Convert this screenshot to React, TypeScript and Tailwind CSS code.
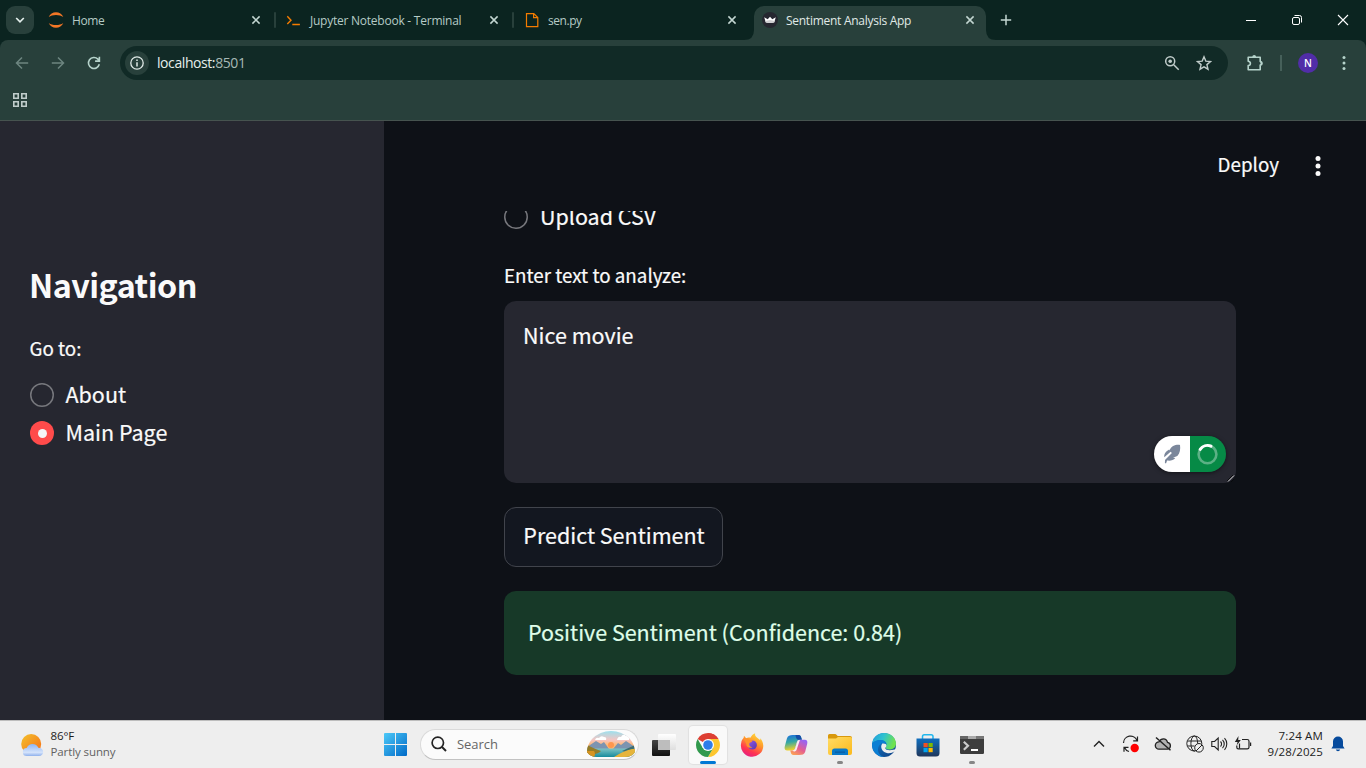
import React from "react";

const ui = "font-['Open_Sans','Noto_Sans',sans-serif]";
const src = "font-['Noto_Sans_CJK_SC','Noto_Sans',sans-serif] [-webkit-text-stroke:0.2px]";

function CloseX() {
  return (
    <svg className="block h-2.5 w-2.5 shrink-0" viewBox="0 0 10 10" stroke="#c3d6d1" strokeWidth="1.5">
      <path d="M1.4 1.4 8.6 8.6M8.6 1.4 1.4 8.6" />
    </svg>
  );
}

function JupyterIcon() {
  return (
    <svg className="block h-4 w-4" viewBox="0 0 16 16" fill="#f37726">
      <path d="M.7 5.1C2 2.1 4.8.3 8 .3s6 1.800 7.300 4.800C13.500 3.700 10.900 2.900 8 2.900S2.500 3.700.7 5.100Z" />
      <path d="M.7 10.900C2 13.900 4.800 15.700 8 15.700s6-1.800 7.300-4.800C13.500 12.300 10.900 13.100 8 13.100s-5.500-.8-7.300-2.200Z" />
    </svg>
  );
}

function PromptIcon() {
  return (
    <svg className="block h-4 w-4" viewBox="0 0 16 16" fill="none" stroke="#f57c00" strokeWidth="1.400">
      <path d="M1.300 4.300 5 8.200 1.300 12.100M6.300 12.500h7.600" />
    </svg>
  );
}

function PageIcon() {
  return (
    <svg className="block h-4 w-4" viewBox="0 0 16 16" fill="none" stroke="#f57c00" strokeWidth="1.200">
      <path d="M2.500 1.600h7.300l4 4v9H2.500ZM9.600 1.600v4h4.200" />
    </svg>
  );
}

function CrownIcon() {
  return (
    <svg className="block h-4 w-4" viewBox="0 0 16 16">
      <circle cx="8" cy="8" r="8" fill="#262730" />
      <path d="M2.200 5.300 5.700 7.200 8 4.700l2.300 2.500 3.500-1.900-1.500 5q-4.300 1-8.600 0Z" fill="#fff" />
      <path d="M3.400 9 8 8l4.600 1-.4 1.500q-4.200 1-8.400 0Z" fill="#cfcfd2" />
    </svg>
  );
}

function Tab({ icon, title, track }: { icon: React.ReactNode; title: string; track: string }) {
  return (
    <div className="flex h-7 w-[232px] items-center pl-2 pr-[11px]">
      {icon}
      <span className={`ml-2 flex-1 whitespace-nowrap pt-0.5 text-[12px] leading-4 ${track}`}>{title}</span>
      <CloseX />
    </div>
  );
}

function TabSep() {
  return <div className="ml-0.5 mr-0.5 h-4 w-0.5 rounded bg-[#28403b]" />;
}

function TabStrip() {
  return (
    <div className="flex h-10 items-start bg-[#0b2420] text-[#b6cbc6]">
      <div className="ml-1.5 mt-1.5 flex h-7 w-7 items-center justify-center rounded-[9px] bg-[#28403b]">
        <svg className="h-2.5 w-2.5" viewBox="0 0 10 10" fill="none" stroke="#e3efec" strokeWidth="1.700">
          <path d="M1.200 3 5 6.800 8.800 3" />
        </svg>
      </div>
      <div className="ml-1.5 mt-1.5 flex items-center">
        <Tab icon={<JupyterIcon />} title="Home" track="tracking-[-0.400px]" />
        <TabSep />
        <Tab icon={<PromptIcon />} title="Jupyter Notebook - Terminal" track="tracking-[-0.240px]" />
        <TabSep />
        <Tab icon={<PageIcon />} title="sen.py" track="tracking-[-0.450px]" />
      </div>
      <div className="flex h-10 items-end">
        <svg className="-ml-1 h-2.5 w-2.5" viewBox="0 0 10 10" fill="#28403b"><path d="M10 0v10H0Q10 10 10 0Z" /></svg>
        <div className="h-[34px] rounded-t-[10px] bg-[#28403b] text-[#e0eae7]">
          <Tab icon={<CrownIcon />} title="Sentiment Analysis App" track="tracking-[-0.270px]" />
        </div>
        <svg className="h-2.5 w-2.5" viewBox="0 0 10 10" fill="#28403b"><path d="M0 0v10h10Q0 10 0 0Z" /></svg>
      </div>
      <svg className="ml-1 mt-[14px] h-3 w-3" viewBox="0 0 12 12" stroke="#c3d6d1" strokeWidth="1.500">
        <path d="M6 .8v10.400M.8 6h10.400" />
      </svg>
      <div className="ml-auto mr-[17px] mt-[14px] flex items-center gap-[34px]">
        <svg className="h-3 w-3" viewBox="0 0 12 12" stroke="#fff"><path d="M1 6.500h10" /></svg>
        <svg className="h-3 w-3" viewBox="0 0 12 12" fill="none" stroke="#fff" strokeWidth="1">
          <rect x="1.500" y="3.500" width="7" height="7" rx="1.500" />
          <path d="M3.500 1.500h5a2 2 0 0 1 2 2v5" />
        </svg>
        <svg className="h-3 w-3" viewBox="0 0 12 12" stroke="#fff" strokeWidth="1.100"><path d="m1 1 10 10M11 1 1 11" /></svg>
      </div>
    </div>
  );
}

function Toolbar() {
  return (
    <div className="bg-[#0b2420]">
      <div className="flex h-[81px] flex-col rounded-t-lg border-b border-[#46534f] bg-[#28403b]">
        <div className="mt-[5px] flex h-9 items-center">
          <svg className="ml-[15px] h-3.5 w-3.5" viewBox="0 0 14 14" fill="none" stroke="#6d8580" strokeWidth="1.500"><path d="M13.200 7H1.500M7 1.500 1.500 7 7 12.500" /></svg>
          <svg className="ml-[22px] h-3.5 w-3.5" viewBox="0 0 14 14" fill="none" stroke="#6d8580" strokeWidth="1.500"><path d="M.8 7h11.700M7 1.500 12.500 7 7 12.500" /></svg>
          <svg className="ml-[22px] h-3.5 w-3.5" viewBox="0 0 14 14" fill="none" stroke="#b6d3cb" strokeWidth="1.600"><path d="M12.300 8.300A5.500 5.500 0 1 1 10.900 3.100L12.300 4.500M12.400.8v4.300H8.100" /></svg>
          <div className="ml-[19px] flex h-[34px] w-[1108px] items-center rounded-full bg-[#112a26]">
            <div className="ml-[5px] flex h-6 w-6 items-center justify-center rounded-full bg-[#28403b]">
              <svg className="h-3.5 w-3.5" viewBox="0 0 14 14" fill="none" stroke="#e0eae7" strokeWidth="1.300">
                <circle cx="7" cy="7" r="6.200" /><path d="M7 6.200v4.200M7 3.500v1.500" strokeWidth="1.500" />
              </svg>
            </div>
            <div className="ml-2 flex-1 text-[14px] leading-5 tracking-[-0.420px] text-[#e5efec]">
              localhost:<span className="text-[#a7b9b5]">8501</span>
            </div>
            <svg className="h-4 w-4" viewBox="0 0 16 16" fill="none" stroke="#c0ccca" strokeWidth="1.500">
              <circle cx="6.200" cy="6.200" r="4.500" /><path d="m9.700 9.700 5 5" /><circle cx="6.200" cy="6.200" r="1.800" fill="#c0ccca" stroke="none" />
            </svg>
            <svg className="ml-4 mr-4 h-4 w-4" viewBox="0 0 16 16" fill="none" stroke="#c0ccca" strokeWidth="1.400">
              <path d="m8 1.800 1.800 4.300 4.700.4-3.600 3.100 1.100 4.600L8 11.800l-4 2.400 1.100-4.600L1.500 6.500l4.700-.4Z" />
            </svg>
          </div>
          <svg className="ml-[18px] h-[18px] w-[18px]" viewBox="0 0 18 18" fill="none" stroke="#b6d3cb" strokeWidth="1.600">
            <path d="M2.200 3.200h12v4.400a1.500 1.500 0 0 1 0 3.400v4.700h-12v-4.100c1.600-.3 2.200-1.100 2.200-2.200S3.800 7.400 2.200 7.200Z" strokeLinejoin="round" />
            <path d="M6.300 3a1.900 1.900 0 0 1 3.800 0ZM14.500 7.500a1.900 1.900 0 0 1 0 3.800Z" fill="#b6d3cb" stroke="none" />
          </svg>
          <div className="ml-4 h-4 w-0.5 bg-[#46605a]" />
          <div className="ml-[16px] flex h-5 w-5 items-center justify-center rounded-full bg-[#512da8] text-[10px] font-semibold text-white">N</div>
          <svg className="ml-[18px] h-4 w-4" viewBox="0 0 16 16" fill="#b6d3cb"><circle cx="8" cy="2.500" r="1.500" /><circle cx="8" cy="8" r="1.500" /><circle cx="8" cy="13.500" r="1.500" /></svg>
        </div>
        <svg className="ml-[13px] mt-3 h-3.5 w-3.5" viewBox="0 0 14 14" fill="none" stroke="#c0ccca" strokeWidth="1.600">
          <path d="M.8.8h4.400v4.400H.8ZM8.800.8h4.400v4.400H8.800ZM.8 8.800h4.400v4.400H.8ZM8.800 8.800h4.400v4.400H8.800Z" />
        </svg>
      </div>
    </div>
  );
}

function Radio({ on }: { on?: boolean }) {
  return on ? (
    <div className="flex h-6 w-6 items-center justify-center rounded-full bg-[#ff4b4b]"><div className="h-[9px] w-[9px] rounded-full bg-[#f5f5f7]" /></div>
  ) : (
    <svg className="h-6 w-6" viewBox="0 0 24 24" fill="none" stroke="#77787d" strokeWidth="1.500"><circle cx="12" cy="12" r="11.250" /></svg>
  );
}

function Sidebar() {
  return (
    <aside className="w-[384px] shrink-0 bg-[#262730] pl-[30px] pt-[140px]">
      <h1 className="-ml-px h-[46px] whitespace-nowrap text-[32.300px] font-bold leading-[46px] tracking-[-0.530px] [-webkit-text-stroke:0]">Navigation</h1>
      <div className="mt-[25px] h-8 whitespace-nowrap text-[18.800px] leading-8"><span className="-ml-[0.500px]">Go to:</span></div>
      <div className="mt-3 flex h-[38px] items-center"><Radio /><span className="-mt-0.5 ml-[11.500px] text-[21.500px] leading-9">About</span></div>
      <div className="flex h-[38px] items-center"><Radio on /><span className="-mt-0.5 ml-[11.500px] text-[21.500px] leading-9">Main Page</span></div>
    </aside>
  );
}

function AssistBadge() {
  return (
    <div className="absolute bottom-[11px] right-2.5 flex h-9 w-[72px] overflow-hidden rounded-full shadow-[0_1px_4px_rgba(0,0,0,0.5)]">
      <div className="flex w-9 items-center justify-center bg-white">
        <svg className="h-5 w-5" viewBox="0 0 20 20" fill="#7b879b">
          <path d="M18 .9C13 .5 9.500 2 7.500 6.500L7.200 5.500C4 7.500 1.800 9.500 2.300 13.300L8.600 7.800l1.300 1.300L3 16l-.1 3.200h1.200l1-2.600c3.300.5 6.300-.2 8.200-2.600l-2.300-.3 4.300-1.600C18 9.300 18.600 5 18 .9Z" />
        </svg>
      </div>
      <div className="flex w-9 items-center justify-center bg-[#068a46]">
        <svg className="h-[22px] w-[22px]" viewBox="0 0 22 22" fill="none" strokeWidth="2.600">
          <circle cx="10.500" cy="11.300" r="8.900" stroke="#5bb185" />
          <path d="M3.200 6.300A8.900 8.900 0 0 1 14 3.200" stroke="#fff" strokeWidth="3" strokeLinecap="round" />
        </svg>
      </div>
    </div>
  );
}

function Main() {
  return (
    <main className="flex flex-1 flex-col bg-[#0e1117]">
      <header className="flex h-[90px] shrink-0 items-center justify-end pr-[45px]">
        <span className="-mt-1 whitespace-nowrap text-[18.800px] leading-8">Deploy</span>
        <svg className="ml-9 h-5 w-[6px]" viewBox="0 0 6 20" fill="#fafafa"><circle cx="3" cy="2.600" r="2.500" /><circle cx="3" cy="10" r="2.500" /><circle cx="3" cy="17.400" r="2.500" /></svg>
      </header>
      <section className="flex min-h-0 flex-1 flex-col overflow-hidden pl-[120px]">
        <div className="-mt-3 flex h-9 shrink-0 items-center"><Radio /><span className="-mt-0.5 ml-3 text-[21.500px] leading-9">Upload CSV</span></div>
        <div className="mt-[24px] h-8 text-[18.800px] leading-8">Enter text to analyze:</div>
        <div className="relative mt-[10px] h-[182px] w-[732px] shrink-0 rounded-xl bg-[#262730] px-[19px] pt-[16px] text-[21.500px] leading-9">
          Nice movie
          <AssistBadge />
          <svg className="absolute bottom-px right-px h-2 w-2" viewBox="0 0 8 8" stroke="#ddd"><path d="M1 7.500 7 1.500" /><path d="M0 7 6 1M4 8l3-3" stroke="#08090c" /></svg>
        </div>
        <button className="mt-6 h-[60px] w-[219px] shrink-0 whitespace-nowrap rounded-xl border border-[#41444c] bg-[#131720] pb-1 pl-px text-[21.500px] leading-9">Predict Sentiment</button>
        <div className="mt-6 h-[84px] w-[732px] shrink-0 rounded-xl bg-[#173928] px-6 py-[23px] text-[21.500px] leading-9 text-[#dffde9]">Positive Sentiment (Confidence: 0.84)</div>
      </section>
    </main>
  );
}

function Tile({ children, active, open }: { children: React.ReactNode; active?: boolean; open?: boolean }) {
  return (
    <div className="flex h-12 w-11 items-center justify-center">
      <div className={active ? "relative flex h-[38px] w-[38px] items-center justify-center rounded bg-[#f9f9f9] shadow-[0_0_1px_1px_rgba(0,0,0,0.06)]" : "relative flex h-[38px] w-[38px] items-center justify-center"}>
        {children}
        {active && <div className="absolute bottom-0 left-[11px] h-[3px] w-4 rounded-full bg-[#0078d4]" />}
        {open && <div className="absolute bottom-0 left-4 h-[3px] w-1.5 rounded-full bg-[#868686]" />}
      </div>
    </div>
  );
}

function TaskIcons() {
  return (
    <div className="-mt-px flex">
      <Tile>
        <svg className="h-6 w-6" viewBox="0 0 24 24">
          <defs>
            <linearGradient id="tv1" x2="0" y2="1"><stop stopColor="#454545" /><stop offset="1" stopColor="#111" /></linearGradient>
            <linearGradient id="tv2" x2="0" y2="1"><stop stopColor="#fff" /><stop offset="1" stopColor="#dedede" /></linearGradient>
          </defs>
          <rect x="0" y="7" width="18" height="16" rx="1" fill="url(#tv1)" />
          <rect x="6" y="1" width="18" height="16" rx="1" fill="url(#tv2)" />
          <path d="M6 7h12v10H6Z" fill="#bdbdbd" />
        </svg>
      </Tile>
      <Tile active>
        <svg className="h-6 w-6" viewBox="0 0 24 24">
          <path d="M12 12 1.610 6A12 12 0 0 1 22.390 6Z" fill="#dd3f33" />
          <path d="M12 0a12 12 0 0 1 10.390 6H12Z" fill="#dd3f33" />
          <path d="M22.390 6A12 12 0 0 1 12 24L17.200 15 12 6Z" fill="#fcc62f" />
          <path d="M1.610 6A12 12 0 0 0 12 24L17.200 15H6.800Z" fill="#31994d" />
          <circle cx="12" cy="12" r="6" fill="#fff" /><circle cx="12" cy="12" r="4.800" fill="#2f7de9" />
        </svg>
      </Tile>
      <Tile>
        <svg className="h-6 w-6" viewBox="0 0 24 24">
          <defs>
            <linearGradient id="ff1" x1=".8" y1="0" x2=".3" y2="1"><stop stopColor="#ffe33d" /><stop offset=".4" stopColor="#ff9a2b" /><stop offset=".75" stopColor="#ff3550" /><stop offset="1" stopColor="#e41f83" /></linearGradient>
            <linearGradient id="ff2" x2="1" y2="1"><stop stopColor="#9257ec" /><stop offset="1" stopColor="#5538ad" /></linearGradient>
          </defs>
          <path d="M15.200.2c-.5 2 .2 3 1.700 4.400l3.400 2.700-.2-2c2 2 3.200 4.700 3.200 7.600A11.200 11.200 0 1 1 1.200 10c.3-2.300 1.100-3.500 2.400-4.900L4 2.800l2.200 2.400c1.300-.8 2.900-1 4.200-.4C11.300 2.800 13 1 15.200.2Z" fill="url(#ff1)" />
          <circle cx="12.300" cy="12" r="4.600" fill="url(#ff2)" />
          <path d="M3.500 5.500c3-.8 4.700-.1 6 1.500l3 .6c-.3 1.500-2 2-3 2.500-.8 2 .2 3.800 2.800 4.200-3 1.500-6.100-.5-6-3.600Z" fill="#ff922c" />
        </svg>
      </Tile>
      <Tile>
        <svg className="h-6 w-6" viewBox="0 0 24 24">
          <defs>
            <linearGradient id="cp1" x2=".2" y2="1"><stop stopColor="#186be0" /><stop offset=".5" stopColor="#36a8a2" /><stop offset="1" stopColor="#f1d22a" /></linearGradient>
            <linearGradient id="cp2" x1=".7" x2=".1" y2="1"><stop stopColor="#9863f2" /><stop offset=".5" stopColor="#e45d91" /><stop offset="1" stopColor="#ffa94d" /></linearGradient>
          </defs>
          <path d="M8.800 2h5.800c1.600 0 2.200 1 2.700 2.700l.6 2.100h-2.200c-1.800 0-2.400 1-2.800 2.500l-1.800 5.900c-.4 1.500-1.300 2.400-3 2.400H4c-3 0-3.900-1.400-3.100-4.500l2-7.700C3.800 2.600 5.800 2 8.800 2Z" fill="url(#cp1)" />
          <path d="M11.500 2h3.100c1.600 0 2.200 1 2.700 2.700l.6 2.100h-3.200c-2-.2-2.800-1.700-3.200-4.800Z" fill="#144da8" />
          <path d="M15.200 22H9.400c-1.600 0-2.200-1-2.700-2.700l-.5-1.700h2.100c1.700 0 2.500-.9 3-2.500l1.800-5.900c.4-1.500 1.300-2.400 3-2.400H20c3 0 3.900 1.400 3.100 4.500l-2 7.700C20.200 21.400 18.200 22 15.200 22Z" fill="url(#cp2)" />
          <path d="M8.300 17.600c1.700 0 2.500-.9 3-2.500l1.800-5.900c.3-1.200.9-2 2-2.300l.8 0-3.200 9.600c-.5 1.500-1.500 2-2.800 2Z" fill="#f7f0f3" />
        </svg>
      </Tile>
      <Tile open>
        <svg className="h-6 w-6" viewBox="0 0 24 24">
          <defs><linearGradient id="fo1" x2="1" y2="1"><stop stopColor="#ffdc65" /><stop offset="1" stopColor="#fbb91c" /></linearGradient></defs>
          <path d="M0 2.500Q0 1 1.500 1H7q1 0 1.700 1l1 1H22q2 0 2 2v5H0Z" fill="#d8980c" />
          <path d="M0 5.500h8l2-1.500h12.500Q24 4 24 5.500V20q0 2-2 2H2q-2 0-2-2Z" fill="url(#fo1)" />
          <path d="M4 22v-4q0-2.500 2.500-2.500h11Q20 15.500 20 18v4Z" fill="#0879c8" /><path d="M7 18.500h10v1.300H7Z" fill="#0b5da3" />
        </svg>
      </Tile>
      <Tile>
        <svg className="h-6 w-6" viewBox="0 0 24 24">
          <defs>
            <linearGradient id="ed1" x2="1" y2=".3"><stop stopColor="#229ddc" /><stop offset=".5" stopColor="#2fc2cf" /><stop offset="1" stopColor="#70e24e" /></linearGradient>
            <linearGradient id="ed2" x2=".6" y2="1"><stop stopColor="#0e8ae0" /><stop offset="1" stopColor="#114a8f" /></linearGradient>
          </defs>
          <circle cx="12" cy="12" r="12" fill="url(#ed2)" />
          <path d="M.3 10C1.400 3.900 6.200 0 12 0c6.600 0 12 4.700 12 10.500 0 3.700-2.700 6-6.200 6-2.500 0-4.300-.8-4.300-1.800 0-.7 1-1.200 1-3.100 0-2.500-2.500-4.700-6-4.700C5 6.900 1.800 8.500.3 10Z" fill="url(#ed1)" />
          <path d="M8.500 7.100C5 7.300 1.500 8.500.1 10.700-.5 18 4.900 23.800 12 24c-4-1-6-4-6-7.400 0-3.100 1.500-5.200 4-6.300 2.300-.4 4.300-.1 4.500 1.300 0-2.300-2.500-4.500-6-4.500Z" fill="#0b7fd4" />
          <path d="M10.300 10.500C8 13 9.300 18.800 14.800 20c3 .6 5.600-.2 7.900-1.800 1-.7 1.600-.1 1.100.6l.2-3c-1.800 1-4 1.400-6.200 1.400-3 0-5.300-1-4.300-2.700 2-2.200.8-4.600-3.200-4Z" fill="#eee" />
        </svg>
      </Tile>
      <Tile>
        <svg className="h-6 w-6" viewBox="0 0 24 24">
          <defs><linearGradient id="st1" x2="0" y2="1"><stop stopColor="#0f6fc0" /><stop offset="1" stopColor="#20365a" /></linearGradient></defs>
          <path d="M6.500 6V3.500Q6.500 1.700 8.300 1.700h6.900Q17 1.700 17 3.500V6" fill="none" stroke="#20b7ed" strokeWidth="1.500" />
          <path d="M.5 5.500h23V20q0 3.500-3.500 3.500H4Q.5 23.500.5 20Z" fill="url(#st1)" />
          <path d="M7.500 10h4.200v4.200H7.500Z" fill="#f25022" /><path d="M12.500 10h4.200v4.200h-4.200Z" fill="#7fba00" /><path d="M7.500 15h4.200v4.200H7.500Z" fill="#00a4ef" /><path d="M12.500 15h4.200v4.200h-4.200Z" fill="#ffb900" />
        </svg>
      </Tile>
      <Tile open>
        <svg className="h-6 w-6" viewBox="0 0 24 24">
          <rect y="3" width="24" height="18" rx="1.200" fill="#3d3d3d" /><path d="M0 6V4.200Q0 3 1.200 3H8v3Z" fill="#666" /><path d="M8 3h8v3H8Z" fill="#aaa" /><path d="M16 3h6.800Q24 3 24 4.200V6h-8Z" fill="#777" />
          <path d="m3.800 8.700 4.200 4-4.200 4" fill="none" stroke="#ccc" strokeWidth="2.200" /><path d="M11 17h7" stroke="#fff" strokeWidth="2" />
        </svg>
      </Tile>
    </div>
  );
}

function Taskbar() {
  return (
    <footer className="flex h-12 items-center border-t border-[#bdbdbd] bg-[#eeeeee]">
      <div className="flex w-[384px] items-center pl-[21px]">
        <svg className="h-6 w-6" viewBox="0 0 24 24">
          <defs>
            <linearGradient id="sun" x2="1" y2="1"><stop stopColor="#f3c22d" /><stop offset="1" stopColor="#f66c16" /></linearGradient>
            <linearGradient id="cld" x2="0" y2="1"><stop stopColor="#8eb5f4" /><stop offset=".7" stopColor="#d4e3fb" /><stop offset="1" stopColor="#8eb0ec" /></linearGradient>
          </defs>
          <circle cx="10.200" cy="11" r="10" fill="url(#sun)" />
          <path d="M6 23a4 4 0 0 1-.3-8C6.800 12.500 9 11 11.500 11c2.800 0 4.900 1.500 5.800 3.800 3 0 4.900 1.700 4.900 4.200 0 2.300-1.700 4-4.200 4Z" fill="url(#cld)" />
        </svg>
        <div className="-mt-0.5 ml-[5.500px] text-[11.500px] leading-4">
          <div className="tracking-[-0.100px] text-[#1b1b1b]">86°F</div>
          <div className="tracking-[-0.100px] text-[#616161]">Partly sunny</div>
        </div>
      </div>
      <svg className="h-[23px] w-[23px]" viewBox="0 0 23 23">
        <defs><linearGradient id="win" x2="1" y2="1"><stop stopColor="#4cc9f8" /><stop offset="1" stopColor="#0069c7" /></linearGradient></defs>
        <path d="M0 1q0-1 1-1h10v11H0ZM12 0h10q1 0 1 1v10H12ZM0 12h11v11H1q-1 0-1-1ZM12 12h11v10q0 1-1 1H12Z" fill="url(#win)" />
      </svg>
      <div className="-mt-px ml-[13px] flex h-[31px] w-[219px] items-center rounded-full border border-[#dadada] border-b-[#c2c2c2] bg-[#fbfbfb]">
        <svg className="ml-2.5 h-4 w-4" viewBox="0 0 16 16" fill="none" stroke="#242424" strokeWidth="1.700"><circle cx="6.800" cy="6.800" r="5.700" /><path d="m11 11 4 4" strokeWidth="2" /></svg>
        <span className="ml-2.5 flex-1 pt-px text-[13px] tracking-[-0.050px] text-[#666]">Search</span>
        <svg className="mr-[3px] h-[26px] w-12" viewBox="0 0 48 26">
          <defs>
            <linearGradient id="sky" x2="0" y2="1"><stop stopColor="#9de0ee" /><stop offset=".35" stopColor="#f6c5c2" /><stop offset=".55" stopColor="#ffb76f" /></linearGradient>
            <linearGradient id="lake" x2="0" y2="1"><stop stopColor="#7fc4c5" /><stop offset="1" stopColor="#168b9d" /></linearGradient>
            <clipPath id="pill"><path d="M0 21Q0 14 5 8 13 0 24 0T43 8q5 6 5 13-3 5-10 5H10Q3 26 0 21Z" /></clipPath>
          </defs>
          <g clipPath="url(#pill)">
            <path d="M0 0h48v26H0Z" fill="url(#sky)" />
            <path d="M8 9q1-3 4-2 2-3 5-1 3 0 2 3ZM30 9q1-4 4-3 2-4 5-1 4 0 3 4Z" fill="#fff" />
            <circle cx="24" cy="14" r="3" fill="#ff964e" />
            <path d="M0 16 9 10l5 3 3-2 5 7H0ZM48 16l-9-6-5 4-3-2-5 6h22Z" fill="#7d94b0" />
            <path d="M0 17.500h48V26H0Z" fill="url(#lake)" />
            <path d="M0 14q8 4 14 6-3 3-11 4l-3-2Z" fill="#967d27" /><path d="M0 20l7 0q2 3 0 6H0Z" fill="#d69421" />
            <path d="M48 14q-9 4-13 6l10 3Z" fill="#3c6d70" /><path d="M27 26q9-6 18-8h3v8Z" fill="#e6b43b" />
          </g>
        </svg>
      </div>
      <div className="ml-[3px] pt-px"><TaskIcons /></div>
      <div className="-mt-px ml-auto flex items-center">
        <svg className="h-3 w-3" viewBox="0 0 12 12" fill="none" stroke="#222" strokeWidth="1.400"><path d="m1 8.500 5-5 5 5" /></svg>
        <svg className="ml-[17px] h-[18px] w-[18px]" viewBox="0 0 18 18" fill="none" stroke="#222" strokeWidth="1.200">
          <path d="M1.500 8A7 7 0 0 1 15 5.500M15.500 1.500v4.300h-4.300M7 16.500A7 7 0 0 1 2.500 12.500M2 16.800v-4.500h4.500" /><circle cx="12.700" cy="13" r="4.200" fill="#f00" stroke="none" />
        </svg>
        <svg className="ml-[14px] h-4 w-[18px]" viewBox="0 0 18 16" fill="none" stroke="#222" strokeWidth="1.300">
          <path d="M5 13.200a3.700 3.700 0 1 1 0-7.400c1-2 2.500-3 4.500-3s3.500 1.500 4 3.500a3.500 3.500 0 0 1 0 6.900Z" fill="#b2b2b2" /><path d="m2 1.500 14.500 12.700" strokeWidth="1.500" />
        </svg>
        <svg className="ml-[14px] h-[18px] w-[18px]" viewBox="0 0 18 18" fill="none" stroke="#222" strokeWidth="1">
          <circle cx="8.300" cy="8.500" r="7.500" /><ellipse cx="8.300" cy="8.500" rx="3.400" ry="7.500" /><path d="M1.500 6h13.700M1.500 11h7" /><circle cx="13" cy="12.800" r="4.300" fill="#eee" /><path d="m10 16 6-6" />
        </svg>
        <svg className="ml-[7px] h-4 w-[17px]" viewBox="0 0 17 16" fill="none" stroke="#222" strokeWidth="1.100">
          <path d="M.8 5.500h2.800L7.200 2v12l-3.600-3.500H.8ZM9.500 5.500a3.500 3.500 0 0 1 0 5M11.500 3.800a6 6 0 0 1 0 8.400M13.500 2.200a8.500 8.500 0 0 1 0 11.600" />
        </svg>
        <svg className="ml-1.5 mr-px h-4 w-[18px]" viewBox="0 0 18 16" fill="none" stroke="#222" strokeWidth="1.200">
          <path d="M8 3.500h5.200q1.800 0 1.800 1.700v6q0 1.700-1.800 1.700H4.300q-1.500 0-1.500-1.700V9.500M16.600 6.500v3.500" /><path d="M4.500 0 .8 6h2.800L2.600 9.500 6.800 4H4.200Z" fill="#222" stroke="none" /><path d="M5.500 7.500v5" />
        </svg>
        <div className="w-[70px] whitespace-nowrap text-right text-[11.500px] leading-4 text-[#222]">
          <div className="tracking-[0.150px]">7:24 AM</div><div className="tracking-[0.120px]">9/28/2025</div>
        </div>
        <svg className="ml-2 mr-[21px] h-4 w-[14px]" viewBox="0 0 14 16" fill="#064a9c"><path d="M7 .5a5 5 0 0 1 5 5V10l1.600 2.500H.4L2 10V5.500a5 5 0 0 1 5-5ZM4.800 13.500h4.400a2.300 2.300 0 0 1-4.400 0Z" /></svg>
      </div>
    </footer>
  );
}

export default function App() {
  return (
    <div className={`flex h-[768px] w-[1366px] flex-col overflow-hidden ${ui}`}>
      <TabStrip />
      <Toolbar />
      <div className={`flex h-[599px] shrink-0 text-[#fafafa] ${src}`}>
        <Sidebar />
        <Main />
      </div>
      <Taskbar />
    </div>
  );
}
